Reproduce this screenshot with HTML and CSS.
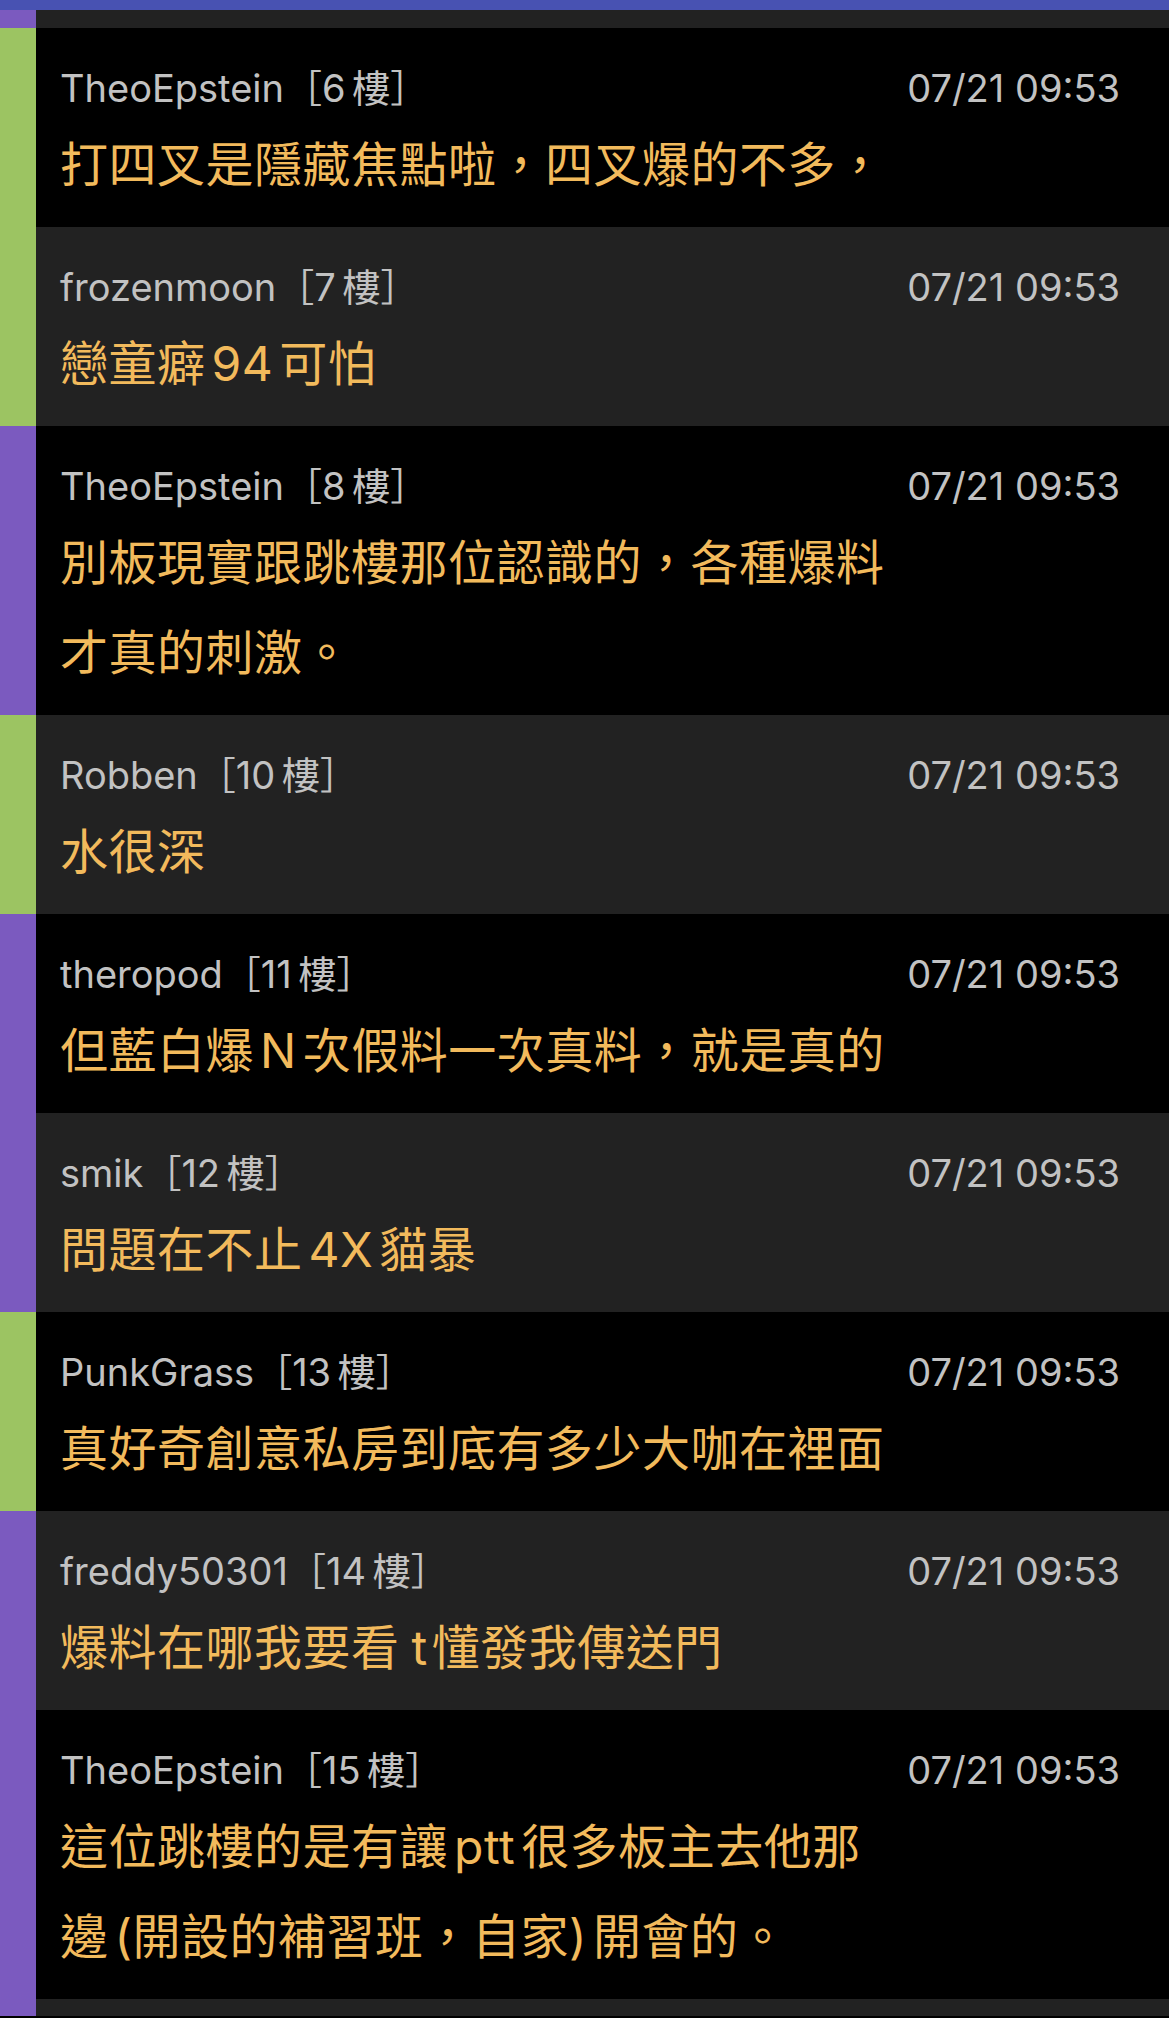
FILE: index.html
```html
<!DOCTYPE html>
<html lang="zh-Hant">
<head>
<meta charset="utf-8">
<title>留言</title>
<link rel="stylesheet" href="styles.css">
</head>
<body>
<div class="topbar"></div>
<div class="list">
  <div class="row row-gray row-stub-top"><div class="strip strip-purple"></div><div class="content"></div></div>

  <div class="row row-black"><div class="strip strip-green"></div><div class="content">
    <div class="meta"><span class="user">TheoEpstein［6 樓］</span><span class="time">07/21 09:53</span></div>
    <p class="text">打四叉是隱藏焦點啦，四叉爆的不多，</p>
  </div></div>

  <div class="row row-gray"><div class="strip strip-green"></div><div class="content">
    <div class="meta"><span class="user">frozenmoon［7 樓］</span><span class="time">07/21 09:53</span></div>
    <p class="text">戀童癖 94 可怕</p>
  </div></div>

  <div class="row row-black"><div class="strip strip-purple"></div><div class="content">
    <div class="meta"><span class="user">TheoEpstein［8 樓］</span><span class="time">07/21 09:53</span></div>
    <p class="text">別板現實跟跳樓那位認識的，各種爆料才真的刺激。</p>
  </div></div>

  <div class="row row-gray"><div class="strip strip-green"></div><div class="content">
    <div class="meta"><span class="user">Robben［10 樓］</span><span class="time">07/21 09:53</span></div>
    <p class="text">水很深</p>
  </div></div>

  <div class="row row-black"><div class="strip strip-purple"></div><div class="content">
    <div class="meta"><span class="user">theropod［11 樓］</span><span class="time">07/21 09:53</span></div>
    <p class="text">但藍白爆 N 次假料一次真料，就是真的</p>
  </div></div>

  <div class="row row-gray"><div class="strip strip-purple"></div><div class="content">
    <div class="meta"><span class="user">smik［12 樓］</span><span class="time">07/21 09:53</span></div>
    <p class="text">問題在不止 4X 貓暴</p>
  </div></div>

  <div class="row row-black"><div class="strip strip-green"></div><div class="content">
    <div class="meta"><span class="user">PunkGrass［13 樓］</span><span class="time">07/21 09:53</span></div>
    <p class="text">真好奇創意私房到底有多少大咖在裡面</p>
  </div></div>

  <div class="row row-gray"><div class="strip strip-purple"></div><div class="content">
    <div class="meta"><span class="user">freddy50301［14 樓］</span><span class="time">07/21 09:53</span></div>
    <p class="text">爆料在哪我要看 <span class="wide">t</span>懂發我傳送門</p>
  </div></div>

  <div class="row row-black"><div class="strip strip-purple"></div><div class="content">
    <div class="meta"><span class="user">TheoEpstein［15 樓］</span><span class="time">07/21 09:53</span></div>
    <p class="text">這位跳樓的是有讓 ptt 很多板主去他那邊 (開設的補習班，自家) 開會的。</p>
  </div></div>

  <div class="row row-gray row-stub-bottom"><div class="strip strip-purple"></div><div class="content"></div></div>
</div>
</body>
</html>
```
FILE: styles.css
```css
html, body {
  margin: 0;
  padding: 0;
  background: #000;
}

body {
  width: 1169px;
  height: 2018px;
  overflow: hidden;
  font-family: "Inter", "Noto Sans CJK TC", sans-serif;
}

.topbar {
  height: 10px;
  background: #4852b2;
}

.list {
  display: flex;
  flex-direction: column;
}

.row {
  display: flex;
  align-items: stretch;
}

.row-black { background: #000; }
.row-gray { background: #222222; }

.row-stub-top { height: 18px; }
.row-stub-bottom { height: 17px; }

.strip {
  width: 36px;
  flex: none;
}
.strip-green { background: #9cc462; }
.strip-purple { background: #7b5abf; }

.content {
  flex: 1;
  padding: 37px 49px 17px 24px;
}

.row-stub-top .content,
.row-stub-bottom .content {
  padding: 0;
}

.meta {
  display: flex;
  justify-content: space-between;
  align-items: center;
  height: 46px;
  line-height: 46px;
  font-size: 38px;
  color: #c2c2c2;
  margin-bottom: 9px;
}

.user {
  font-family: "Inter", "Noto Sans CJK TC", sans-serif;
  word-spacing: -4px;
}

.time {
  font-family: "Inter", sans-serif;
}

.text {
  margin: 0;
  max-width: 834px;
  font-size: 48px;
  line-height: 90px;
  letter-spacing: 0.5px;
  word-spacing: -8px;
  color: #f2ba5c;
  font-family: "Inter", "Noto Sans CJK TC", sans-serif;
}

.wide {
  padding: 0 4px 0 6px;
}
```
